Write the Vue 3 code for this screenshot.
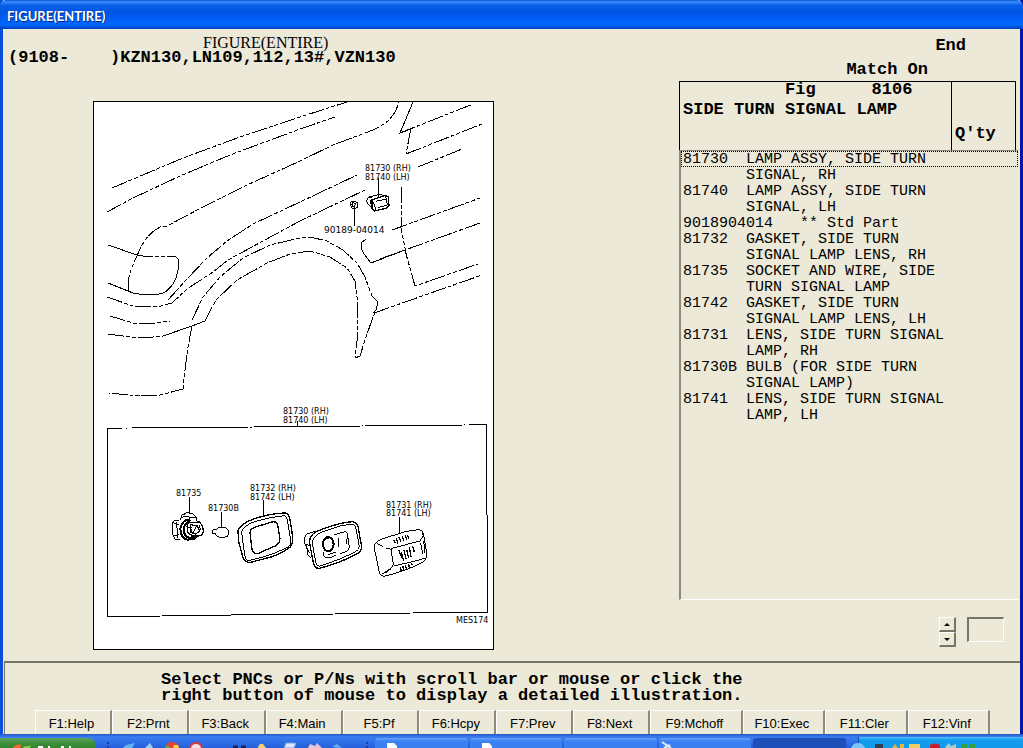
<script setup>
import { ref } from 'vue'

const models = '(9108-    )KZN130,LN109,112,13#,VZN130'
const rows = [
  '81730  LAMP ASSY, SIDE TURN',
  '       SIGNAL, RH',
  '81740  LAMP ASSY, SIDE TURN',
  '       SIGNAL, LH',
  '9018904014   ** Std Part',
  '81732  GASKET, SIDE TURN',
  '       SIGNAL LAMP LENS, RH',
  '81735  SOCKET AND WIRE, SIDE',
  '       TURN SIGNAL LAMP',
  '81742  GASKET, SIDE TURN',
  '       SIGNAL LAMP LENS, LH',
  '81731  LENS, SIDE TURN SIGNAL',
  '       LAMP, RH',
  '81730B BULB (FOR SIDE TURN',
  '       SIGNAL LAMP)',
  '81741  LENS, SIDE TURN SIGNAL',
  '       LAMP, LH'
]
const current = ref(0)
const quantity = ref('')

const keys = [
  { label: 'F1:Help' },
  { label: 'F2:Prnt' },
  { label: 'F3:Back' },
  { label: 'F4:Main' },
  { label: 'F5:Pf' },
  { label: 'F6:Hcpy' },
  { label: 'F7:Prev' },
  { label: 'F8:Next' },
  { label: 'F9:Mchoff', size: 'wide' },
  { label: 'F10:Exec', size: 'medium' },
  { label: 'F11:Cler', size: 'medium' },
  { label: 'F12:Vinf', size: 'medium' }
]
</script>

<template>
  <div class="screen">
    <div class="window">
      <header class="titlebar">FIGURE(ENTIRE)</header>

      <main class="body">
        <section class="left">
          <h1 class="heading">FIGURE(ENTIRE)</h1>
          <p class="models">{{ models }}</p>

          <svg class="figure" viewBox="94 102 399 547" role="img" aria-label="Side turn signal lamp illustration">
            <g class="body-lines">
              <path d="M112 188L183 158L240 137L300 117L347 102" />
              <path d="M107 212L133 198L180 176L230 155L300 129L335 117" />
              <path d="M128 291V280L132 267L140 249L145 240Q152 231 160 227L167 226L203 207L247 185L298 162L333 145L373 130Q384 125 390 119Q397 111 399 102" />
              <path d="M168 300L187 279L207 258L227 241L253 224L300 202L357 175" />
              <path d="M107 297L133 306L157 307L172 303L187 289L213 272L228 260L263 241L300 221L365 190" />
              <path d="M192 320L203 297L220 277L243 258L270 245L300 238L310 237L327 241L343 250L357 263L365 277L372 296" />
              <path d="M205 321Q211 308 217 299L237 280L267 263L290 254L310 251L330 257L347 268L355 281L357 297L358 333L355 358" />
              <path d="M110 316L133 323L150 324L170 321" />
              <path d="M108 334L130 337H153L163 336" />
              <path d="M192 326L188 347L185 370L183 389L160 395L140 396L109 393" />
              <path d="M355 358L360 356L365 340L373 317L376 310" />
              <path d="M374 313L425 295L482 275" />
              <path d="M371 263L405 250L415 286L478 264" />
              <path d="M402 187L401 228L407 258" />
              <path d="M392 230L480 198" />
              <path d="M380 259L480 223" />
              <path d="M400 133L473 104" />
              <path d="M411 128L406 154" />
              <path d="M406 154L482 124" />
              <path d="M418 167L462 149" />
              <path d="M137 255L143 256H173" />
            </g>
            <g class="solid">
              <path d="M108 245L137 255" />
              <path d="M170 256H175L178 259V270Q176 280 173 284Q168 291 163 293Q151 297 133 293L108 283" />
              <path d="M163 336L192 326L205 321" />
              <path d="M372 296L378 302L376 310L373 313" />
              <path d="M366 239L361 243V248L364 254L371 263" />
              <path d="M413 102L400 133L411 129" />
              <path d="M378 178V198" />
              <path d="M354 209V226" />
              <path d="M297 421V426" />
              <path d="M107.500 616V428.500H122M126 428.500H127M132 427.500H248M250 427.500H252M254 426.500H360M362 425.500H363M365 425.500H462M464 424.500H465M469 424.500H486.500V510L487.500 520V612.500H413M410 613.500H335M333 614.500H231M231 615.500H162M160 616.500H107" />
            </g>

            <!-- lamp and clip on the fender -->
            <g class="part" transform="translate(290 95) scale(.3333)">
              <path class="thick" d="M246 315L286 301L295 306L297 331L288 340L253 348L246 340Z" />
              <path d="M250 321L258 345M258 319L289 312L292 330L264 338M286 301L289 312M246 315L250 321M246 308L237 306L230 315L232 326L243 336M237 306L265 299L286 301M243 316L240 328" />
              <path d="M180 322L190 318L203 323L201 338L192 342L184 337ZM187 323L196 325L194 337L187 333ZM180 330H187M196 325L203 323" />
            </g>

            <!-- socket, bulb and gasket -->
            <g class="part" transform="translate(90 400) scale(.3333)">
              <path d="M298 292V338M394 336V381M520 300V348" />
              <path d="M272 359L276 345L290 338L308 341L318 350L320 364M276 352L292 348L304 354L318 354M283 345L288 339M268 360L252 362L247 368L249 405L255 418H270M250 368L268 374M259 365L264 414M250 408L266 404" />
              <path class="heavy" d="M300 358Q276 360 271 385Q271 415 293 419L313 416L324 407M302 361Q284 367 281 388Q282 411 300 414L319 408" />
              <path class="thick" d="M293 369L328 366L338 378L340 395L335 406L306 407L292 397ZM302 374L322 378L329 392L318 402L303 397Z" />
              <path d="M308 380L299 390M318 382L310 398M326 374L333 389M288 380L306 383" />
              <path d="M381 386L388 381L405 383Q417 387 417 398Q416 411 403 412L388 412L377 406V400L368 401L367 392L372 388L381 389Z" />
              <path class="thick" d="M444 393Q448 379 470 366Q510 347 565 340L588 339Q597 343 600 358L608 410Q609 430 602 440Q578 459 547 470L482 487Q468 489 460 476L446 425Z" />
              <path d="M455 396Q460 380 485 368Q530 352 582 347Q592 349 593 366L603 427Q602 441 584 446Q540 468 475 482Q467 480 464 466Z" />
              <path class="thick" d="M480 398Q480 386 497 381L545 366Q560 363 563 374L570 415Q569 431 556 438L505 460Q490 464 486 449Z" />
            </g>

            <!-- housing and lens -->
            <g class="part" transform="translate(290 400) scale(.3333)">
              <path class="thick" d="M65 407Q70 397 98 387Q145 369 187 365Q201 367 204 379L215 440Q215 455 199 463Q150 489 85 506Q74 502 71 492L59 431Q58 414 65 407Z" />
              <path d="M74 412Q80 400 107 392Q150 375 188 372Q196 375 198 387L208 439Q208 449 196 456Q147 481 88 499Q80 497 78 488L67 432Q67 419 74 412Z" />
              <path d="M100 387L60 399L47 404L43 417L44 433L50 438L53 465L62 473L68 468M44 433L58 436M49 440L58 458M98 387L86 391" />
              <path class="heavy" d="M117 411Q103 411 99 427Q98 451 114 454Q129 452 131 433Q129 413 117 411ZM104 417L122 411" />
              <path d="M131 405L165 395Q173 397 173 405L178 442Q177 453 165 456L150 461M145 413L147 440M172 412L169 432M99 456L103 471L120 474L138 466M113 464L137 457" />
              <path d="M329 350V400M254 434Q259 423 285 414L350 394L387 389Q399 390 401 403L410 460Q411 479 399 486Q357 511 282 529Q268 526 267 513L254 450Z" />
              <path d="M261 430L279 440M287 444L303 448L310 493L302 507L285 520M302 446L390 423L402 405M311 498L364 486L408 474M392 430L398 461M401 423L405 460M276 522L303 505M395 389L401 412" />
              <path class="thick" d="M311 419L316 430M318 415L324 430M327 411L333 426M336 409L342 423M345 406L351 420M352 404L357 415M326 449L335 473M334 455L341 483M342 450L348 477M350 449L356 474M358 440L363 472M367 437L373 456M331 500L334 515M338 497L342 513M346 494L350 509M355 491L359 504M364 488L367 496" />
            </g>

            <g class="labels">
              <text x="365" y="171">81730 (RH)</text>
              <text x="365" y="180">81740 (LH)</text>
              <text class="wide" x="324" y="233">90189-04014</text>
              <text x="283" y="414">81730 (RH)</text>
              <text x="283" y="423">81740 (LH)</text>
              <text x="176" y="496">81735</text>
              <text x="208" y="511">81730B</text>
              <text x="250" y="491">81732 (RH)</text>
              <text x="250" y="500">81742 (LH)</text>
              <text x="386" y="508">81731 (RH)</text>
              <text x="386" y="516">81741 (LH)</text>
              <text x="456" y="623">MES174</text>
            </g>
          </svg>
        </section>

        <section class="right">
          <div class="actions">
            <button type="button" class="plain end">End</button>
            <button type="button" class="plain match">Match On</button>
          </div>
          <div class="fig-head">
            <div class="fig-info">
              <div class="fig-number"><span>Fig</span><span>8106</span></div>
              <div>SIDE TURN SIGNAL LAMP</div>
            </div>
            <div class="qty">Q'ty</div>
          </div>
          <ul class="parts" role="listbox" aria-label="Parts">
            <li
              v-for="(row, i) in rows"
              :key="i"
              role="option"
              :aria-selected="i === current"
              :class="{ current: i === current }"
              @click="current = i"
            >{{ row }}</li>
          </ul>
          <div class="stepper">
            <div class="arrows">
              <button type="button" aria-label="Up"><i class="up"></i></button>
              <button type="button" aria-label="Down"><i class="down"></i></button>
            </div>
            <input v-model="quantity" type="text" aria-label="Quantity" />
          </div>
        </section>
      </main>

      <footer class="footer">
        <p class="message">Select PNCs or P/Ns with scroll bar or mouse or click the<br />right button of mouse to display a detailed illustration.</p>
        <div class="keys">
          <button v-for="k in keys" :key="k.label" type="button" :class="k.size">{{ k.label }}</button>
        </div>
      </footer>
    </div>

    <nav class="taskbar" aria-label="Taskbar">
      <button type="button" class="start" aria-label="Start">
        <svg viewBox="0 0 96 10" width="96" height="10">
          <path d="M13 10Q15 5 22 7L20 10Z" fill="#f26a2c" />
          <path d="M24 8Q27 9 31 7L30 10H23Z" fill="#86cf3f" />
          <path d="M38 9H43M49 8V10M61 9H64M70 8V10" stroke="#fff" stroke-width="2" />
        </svg>
      </button>
      <svg class="quick" viewBox="0 0 279 10" width="279" height="10" aria-hidden="true">
        <path d="M11 5h2M11 9h2M270 5h2M270 9h2" stroke="#163f9e" stroke-width="2" />
        <path d="M27 10L30 7L39 5L36 10Z" fill="#65b5ec" />
        <path d="M49 10L54 5L57 10Z" fill="#9bd0f5" />
        <path d="M69 10Q70 4 76 4Q82 4 83 10Z" fill="#e64132" />
        <path d="M70 7L75 10H69Z" fill="#4bb34a" />
        <path d="M78 7H82L83 10H77Z" fill="#f8d33d" />
        <path d="M94 10Q95 5 100 5Q105 5 106 10" fill="#f3dfe4" stroke="#d33b48" stroke-width="2" />
        <path d="M137 9h5M145 9h5" stroke="#162352" stroke-width="3" />
        <path d="M162 10Q163 5 167 6L170 10Z" fill="#f3d071" />
        <path d="M188 10L190 5H200L198 10Z" fill="#dce8fa" stroke="#739de6" />
        <path d="M212 10L214 6L219 8L221 5L226 10Z" fill="#e8c2d9" />
        <path d="M236 9L241 6L246 10Z" fill="#6aaef0" />
      </svg>
      <div class="tasks">
        <button type="button" aria-label="Document">
          <svg viewBox="0 0 24 8" width="24" height="8"><path d="M12 8V3H19L22 6V8Z" fill="#fff" /></svg>
        </button>
        <button type="button" aria-label="Document">
          <svg viewBox="0 0 24 8" width="24" height="8"><path d="M12 8V3H19L22 6V8Z" fill="#fff" /></svg>
        </button>
        <button type="button" aria-label="Window"></button>
        <button type="button" aria-label="Tools">
          <svg viewBox="0 0 24 8" width="24" height="8"><path d="M3 2L12 8M5 8L11 5" stroke="#e9edf3" stroke-width="2" /></svg>
        </button>
        <button type="button" class="active" aria-label="Figure"></button>
      </div>
      <div class="tray">
        <svg viewBox="0 0 165 10" width="165" height="10" aria-hidden="true">
          <path d="M-8 10Q-6 5 -1 5Q4 5 6 10Z" fill="#7cc5fa" />
          <path d="M16 9h8" stroke="#344050" stroke-width="6" />
          <path d="M33 10L36 6L39 10ZM41 6H45V10H41Z" fill="#e3b73b" />
          <path d="M50 6H61V10H50Z" fill="#f0cd62" />
          <path d="M71 10V7Q76 4 81 7V10Z" fill="#c81d2d" />
          <path d="M86 9L90 5L92 8L97 6V10H87Z" fill="#a9ccd0" />
          <path d="M102 6H108V10H102ZM110 6H116V10H110Z" fill="#32a03b" />
        </svg>
      </div>
    </nav>
  </div>
</template>

<style>
body {
  margin: 0;
  background: #ece9d8;
}
</style>

<style scoped>
* {
  box-sizing: border-box;
}
.screen {
  display: flex;
  flex-direction: column;
  min-height: 100vh;
  overflow: hidden;
  color: #000;
  background: #ece9d8;
}
button {
  font: inherit;
  color: inherit;
}
.window {
  flex: 1;
  display: flex;
  flex-direction: column;
  border-left: 3px solid #0a4fe0;
  border-right: 3px solid #0219a8;
}
.titlebar {
  height: 29px;
  margin: 0 -3px;
  padding-left: 7px;
  border-radius: 6px 6px 0 0;
  background: linear-gradient(#0a5ad8 0, #3c8dfb 2px, #0a60ea 5px, #0054e3 12px, #0060f8 20px, #0068ff 25px, #0050d8 27px, #0340b8 29px);
  color: #fff;
  font: bold 13px/32px Lato, "Liberation Sans", sans-serif;
  text-shadow: 1px 1px 0 #0a2a80;
}
.body {
  flex: 1;
  display: grid;
  grid-template-columns: 1fr 341px;
}
.left {
  padding-top: 6px;
}
.heading {
  margin: 0 0 0 200px;
  font: normal 16px/15px "Liberation Serif", serif;
}
.models {
  margin: 0 0 0 5px;
  white-space: pre;
}
.models,
.right,
.message {
  font: bold 17px/16px "Liberation Mono", monospace;
}
.figure {
  display: block;
  box-sizing: content-box;
  width: 399px;
  height: 547px;
  margin: 35px 0 0 90px;
  border: 1px solid #000;
  background: #fff;
  shape-rendering: crispEdges;
}
.body-lines,
.solid,
.part {
  fill: none;
  stroke: #000;
  stroke-width: 1px;
}
.body-lines {
  stroke-dasharray: 16 2 4 2 4 2;
}
.part path {
  stroke-width: 3px;
}
.part .thick {
  stroke-width: 4px;
}
.part .heavy {
  stroke-width: 6px;
}
.labels text {
  font: 8px "DejaVu Sans", sans-serif;
  fill: #000;
  stroke: none;
}
.labels .wide {
  font-size: 9px;
}
.right {
  display: flex;
  flex-direction: column;
  padding-top: 9px;
}
.actions {
  display: flex;
  flex-direction: column;
  align-items: flex-end;
  gap: 8px;
  height: 43px;
}
.plain {
  padding: 0;
  border: 0;
  background: none;
}
.end {
  margin-right: 54px;
}
.match {
  margin-right: 92px;
}
.fig-head {
  display: grid;
  grid-template-columns: 1fr 64px;
  height: 69px;
  margin-right: 4px;
  border: 1px solid #000;
  border-bottom: 0;
}
.fig-info {
  padding-left: 3px;
}
.fig-number {
  display: flex;
  gap: 56px;
  padding-left: 102px;
  margin-bottom: 4px;
}
.qty {
  padding: 44px 0 0 3px;
  border-left: 1px solid #000;
}
.parts {
  flex: 1;
  margin: 0 2px 0 0;
  padding: 0;
  list-style: none;
  font: 15px/18px "Liberation Mono", monospace;
  border: solid;
  border-width: 1px 0 1px 2px;
  border-color: #8d8a7c #fff #fff #8d8a7c;
}
.parts li {
  height: 16px;
  padding-left: 2px;
  white-space: pre;
}
.parts .current {
  outline: 1px dotted #000;
  outline-offset: -1px;
}
.stepper {
  display: flex;
  align-items: flex-start;
  justify-content: flex-end;
  gap: 11px;
  height: 61px;
  padding: 17px 16px 0 0;
}
.arrows {
  display: grid;
}
.arrows button {
  display: grid;
  place-items: center;
  width: 17px;
  height: 15px;
  padding: 0;
  border: 1px solid;
  border-color: #fff #77746a #77746a #fff;
  border-right-width: 2px;
  border-bottom-width: 2px;
  background: #ece9d8;
}
.up,
.down {
  border: 3px solid transparent;
}
.up {
  border-top: 0;
  border-bottom-color: #000;
}
.down {
  border-bottom: 0;
  border-top-color: #000;
}
.stepper input {
  width: 37px;
  height: 25px;
  padding: 0 2px;
  border: 2px solid;
  border-color: #77746a #fff #fff #77746a;
  border-right-width: 1px;
  border-bottom-width: 1px;
  background: #ece9d8;
}
.footer {
  margin-left: 1px;
  padding-top: 9px;
  border-top: 2px solid #77746a;
  border-left: 1px solid #77746a;
}
.message {
  margin: 0 0 6px 156px;
}
.keys {
  display: flex;
  margin: 0 30px;
}
.keys button {
  flex: 77 1 0;
  height: 24px;
  padding: 2px 3px 0 0;
  border: solid;
  border-width: 1px 2px 0 1px;
  border-color: #fff #8d8a7c #fff #fff;
  background: #ece9d8;
  font: 13px/20px "Liberation Sans", sans-serif;
}
.keys .wide {
  flex-grow: 94;
}
.keys .medium {
  flex-grow: 83;
}
.taskbar {
  display: flex;
  align-items: flex-end;
  height: 14px;
  overflow: hidden;
  background: linear-gradient(#2357c8 0, #3b7df0 3px, #3373ea 6px, #2560dc 14px);
}
.taskbar svg {
  display: block;
}
.start {
  width: 96px;
  height: 10px;
  padding: 0;
  border: 0;
  border-radius: 0 8px 0 0;
  background: linear-gradient(#5fa45c, #3b8f3b 5px, #34862f);
}
.tasks {
  flex: 1;
  display: flex;
  gap: 2px;
  margin-right: 12px;
}
.tasks button {
  flex: 1;
  height: 10px;
  padding: 2px 0 0;
  border: 0;
  border-radius: 3px 3px 0 0;
  background: linear-gradient(#6aa3fb, #3c81f3 3px, #3a7ff0);
}
.tasks .active {
  background: #1c4fb8;
}
.tray {
  width: 165px;
  height: 11px;
  padding-top: 1px;
  border-left: 1px solid #0c4fae;
  background: linear-gradient(#4cc0fa, #159bee 3px, #139aea);
}
.tray svg {
  overflow: visible;
}
</style>
